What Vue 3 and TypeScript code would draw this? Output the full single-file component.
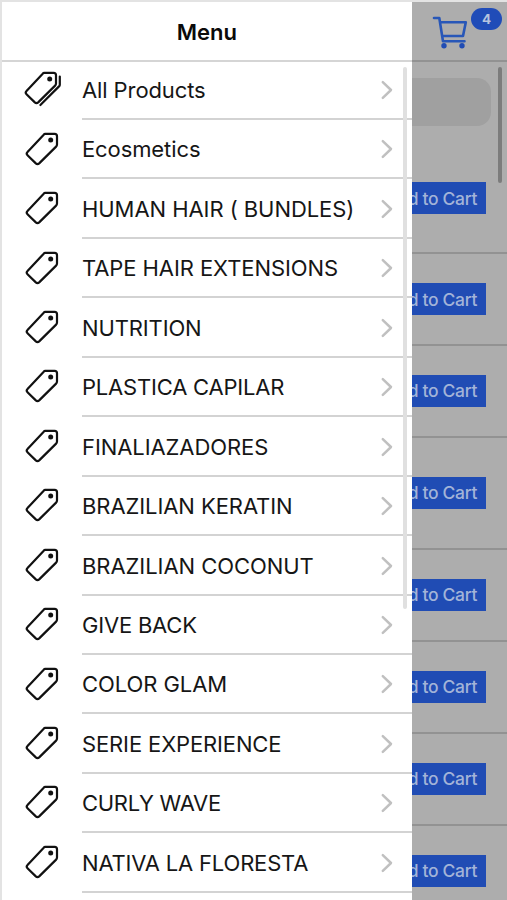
<script setup lang="ts">
interface Category {
  label: string
  tracking: number
  stacked?: boolean
}

const categories: Category[] = [
  { label: 'All Products', tracking: -0.1, stacked: true },
  { label: 'Ecosmetics', tracking: -0.1 },
  { label: 'HUMAN HAIR ( BUNDLES)', tracking: -0.06 },
  { label: 'TAPE HAIR EXTENSIONS', tracking: -0.08 },
  { label: 'NUTRITION', tracking: -0.13 },
  { label: 'PLASTICA CAPILAR', tracking: -0.2 },
  { label: 'FINALIAZADORES', tracking: -0.08 },
  { label: 'BRAZILIAN KERATIN', tracking: -0.08 },
  { label: 'BRAZILIAN COCONUT', tracking: -0.06 },
  { label: 'GIVE BACK', tracking: -0.2 },
  { label: 'COLOR GLAM', tracking: -0.06 },
  { label: 'SERIE EXPERIENCE', tracking: -0.13 },
  { label: 'CURLY WAVE', tracking: -0.3 },
  { label: 'NATIVA LA FLORESTA', tracking: -0.18 },
  { label: '', tracking: 0 },
]

const productHeights: number[] = [110, 92, 91.5, 112, 92, 92, 92, 92]
const cartCount = 4
</script>

<template>
  <div class="screen">
    <main class="shop">
      <header class="shop-header">
        <svg class="cart" viewBox="0 0 36 34" fill="none">
          <path d="M2 3h5.3L11 26.2h21.5M8 7.3h25.8L31 21H10.2" stroke="#2857b8" stroke-width="2.6" stroke-linejoin="round" stroke-linecap="round" />
          <circle cx="12" cy="30.7" r="2.7" fill="#204cb4" />
          <circle cx="30" cy="30.7" r="2.7" fill="#204cb4" />
        </svg>
        <span class="badge">{{ cartCount }}</span>
      </header>
      <div class="search-row"><div class="search"></div></div>
      <div v-for="(height, i) in productHeights" :key="i" class="product" :style="{ height: height + 'px' }">
        <button class="add">Add to Cart</button>
      </div>
      <div class="shop-scroll"></div>
    </main>
    <nav class="drawer">
      <header class="title">Menu</header>
      <ul class="list">
        <li v-for="(item, i) in categories" :key="i" class="row">
          <svg v-if="item.label" class="tag" :class="{ stacked: item.stacked }" viewBox="0 0 42 38" fill="none" stroke="#111" stroke-width="2.2" stroke-linejoin="round" stroke-linecap="round">
            <path d="M22.3 2.9H31.6q2.4 0 2.4 2.4v8.2q0 1.2-.9 2.1L16.2 32.4q-1.7 1.6-3.4 0L4.5 24.2q-1.6-1.6 0-3.2L20.5 3.9q.8-1 1.8-1z" />
            <circle cx="27.7" cy="9.1" r="2.5" fill="#111" stroke="none" />
            <path v-if="item.stacked" d="M37.8 6.6v8.1q0 1-.8 1.7L18.4 35" />
          </svg>
          <div class="body">
            <span class="label" :style="{ letterSpacing: item.tracking + 'px' }">{{ item.label }}</span>
            <svg class="chevron" viewBox="0 0 12 20" fill="none">
              <path d="M1.8 2.2 10 10l-8.2 7.8" stroke="#c0c0c0" stroke-width="2.5" stroke-linecap="round" stroke-linejoin="round" />
            </svg>
          </div>
        </li>
      </ul>
      <div class="drawer-scroll"></div>
    </nav>
  </div>
</template>

<style>
body {
  margin: 0;
  overflow: hidden;
}
</style>

<style scoped>
.screen {
  position: relative;
  box-sizing: border-box;
  width: 507px;
  height: 900px;
  overflow: hidden;
  border-top: 2px solid #e3e3e3;
  border-left: 2px solid #e3e3e3;
  background: #adadad;
  font-family: Inter, "Liberation Sans", sans-serif;
}
.shop {
  height: 898px;
  overflow: hidden;
}
.shop-header {
  box-sizing: border-box;
  height: 60px;
  display: flex;
  justify-content: flex-end;
  align-items: flex-start;
  gap: 3px;
  padding: 6px 5px 0 0;
  border-bottom: 2px solid #929292;
}
.cart {
  width: 36px;
  height: 34px;
  margin-top: 7px;
}
.badge {
  width: 31px;
  height: 22px;
  border-radius: 11px;
  background: #204cb8;
  color: #b6c3df;
  font-size: 13.5px;
  font-weight: 700;
  line-height: 23px;
  text-align: center;
}
.search-row {
  box-sizing: border-box;
  height: 82px;
  padding: 16px 16px 0 16px;
}
.search {
  height: 48px;
  border-radius: 14px;
  background: #a0a0a0;
}
.product {
  box-sizing: border-box;
  display: flex;
  justify-content: flex-end;
  align-items: center;
  padding-right: 21px;
  border-bottom: 2px solid #929292;
}
.add {
  height: 32px;
  padding: 0 9px;
  border: 0;
  background: #204cb4;
  color: #a3b4d8;
  font-family: inherit;
  font-size: 17.5px;
  font-weight: 500;
  letter-spacing: -0.35px;
}
.shop-scroll {
  position: absolute;
  top: 65px;
  right: 5px;
  width: 4px;
  height: 116px;
  border-radius: 2px;
  background: #7c7c7c;
}
.drawer {
  position: absolute;
  top: 0;
  left: 0;
  width: 409.5px;
  height: 898px;
  overflow: hidden;
  background: #fff;
}
.title {
  box-sizing: border-box;
  height: 60px;
  border-bottom: 2px solid #d5d5d5;
  color: #0a0a0a;
  font-size: 22px;
  font-weight: 600;
  line-height: 60px;
  text-align: center;
}
.list {
  margin: -1.4px 0 0;
  padding: 0;
  list-style: none;
}
.row {
  display: flex;
  height: 59.45px;
}
.tag {
  flex: none;
  width: 42px;
  height: 38px;
  margin: 10.6px 17px 0 21px;
}
.tag.stacked {
  margin: 9px 18.5px 0 19.5px;
}
.row:last-child .body {
  margin-left: 80px;
}
.body {
  flex: 1;
  box-sizing: border-box;
  display: flex;
  align-items: center;
  justify-content: space-between;
  padding: 1.4px 18.5px 0 0;
  border-bottom: 2px solid #d3d3d3;
}
.label {
  color: #161616;
  font-size: 22px;
  line-height: 28px;
  white-space: nowrap;
}
.chevron {
  flex: none;
  width: 12px;
  height: 20px;
}
.drawer-scroll {
  position: absolute;
  top: 65px;
  right: 5px;
  width: 4px;
  height: 542px;
  border-radius: 2px;
  background: #e0e0e0;
}
</style>
